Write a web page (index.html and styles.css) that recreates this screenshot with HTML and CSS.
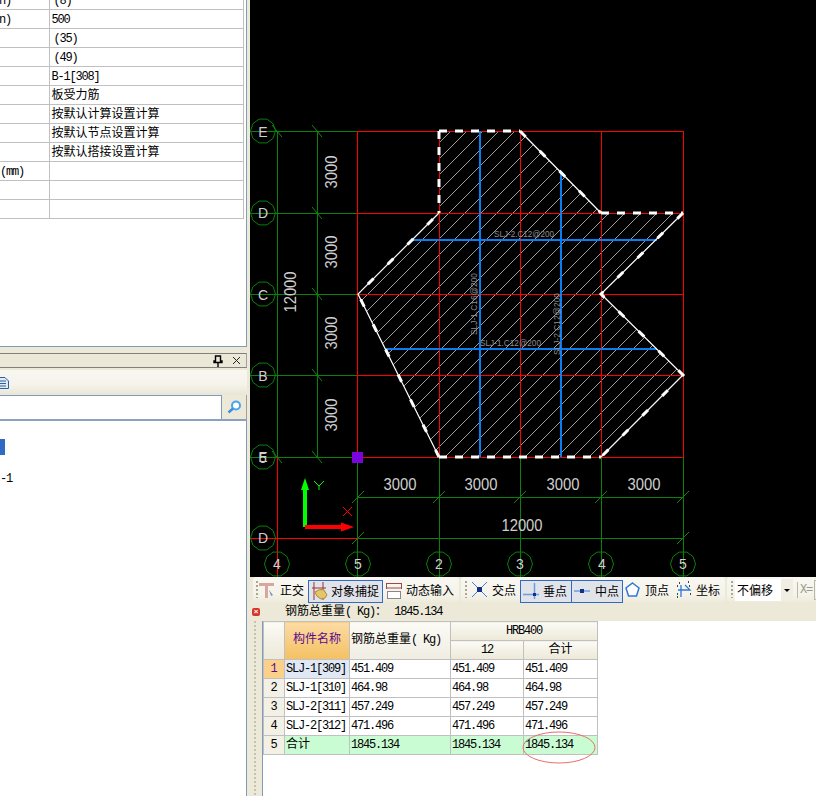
FILE: index.html
```html
<!DOCTYPE html>
<html lang="zh-CN">
<head>
<meta charset="utf-8">
<title>钢筋总重量</title>
<link rel="stylesheet" href="styles.css">
</head>
<body>
<div class="app">
  <aside class="side">
    <div class="props">
      <table class="prop-table">
        <colgroup><col class="pc1"><col class="pc2"></colgroup>
        <tr><td><span class="cut">h)</span></td><td class="in">(8)</td></tr>
        <tr><td><span class="cut">n)</span></td><td>500</td></tr>
        <tr><td></td><td class="in">(35)</td></tr>
        <tr><td></td><td class="in">(49)</td></tr>
        <tr><td></td><td>B-1[308]</td></tr>
        <tr><td></td><td class="cjk">板受力筋</td></tr>
        <tr><td></td><td class="cjk">按默认计算设置计算</td></tr>
        <tr><td></td><td class="cjk">按默认节点设置计算</td></tr>
        <tr><td></td><td class="cjk">按默认搭接设置计算</td></tr>
        <tr><td>(mm)</td><td></td></tr>
        <tr><td></td><td></td></tr>
        <tr><td></td><td></td></tr>
      </table>
    </div>
    <div class="pane-head">
      <svg class="pin" width="10" height="12" viewBox="0 0 10 12"><path d="M2.5 1h5v5h1.5v1.5h-8V6h1.5zM5 7.5V12" fill="none" stroke="#000" stroke-width="1.4"/></svg>
      <svg class="close" width="9" height="9" viewBox="0 0 9 9"><path d="M1 1l7 7M8 1L1 8" stroke="#222" fill="none"/></svg>
    </div>
    <div class="pane-tools">
      <svg width="9" height="12" viewBox="0 0 9 12"><path d="M-4 .5h9l3.5 3.5v7.5H-4z" fill="#dfe9f8" stroke="#2f5f9f"/><path d="M-3 4h9M-3 6.5h9M-3 9h9" stroke="#2f5f9f"/></svg>
    </div>
    <div class="pane-search">
      <div class="search-box"></div>
      <div class="search-btn">
        <svg width="15" height="14" viewBox="0 0 15 14"><circle cx="9" cy="5.5" r="4" fill="#fff" stroke="#4aa3ee" stroke-width="2"/><path d="M6 8.500L1.500 12.500" stroke="#3a8fe0" stroke-width="2.500"/></svg>
      </div>
    </div>
    <div class="pane-list">
      <div class="tree-mark"></div>
      <div class="tree-text">-1</div>
    </div>
  </aside>

  <main class="work">
    <svg class="canvas" width="566" height="577" viewBox="250 0 566 577">
      <defs>
        <pattern id="hatch" patternUnits="userSpaceOnUse" x="3" y="3" width="16" height="16">
          <path d="M-1 17L17 -1" stroke="#c4c4c4" stroke-width="0.8"/>
        </pattern>
        <polygon id="bub" points="12.500,0 10.100,7.300 3.900,11.900 -3.900,11.900 -10.100,7.300 -12.500,0 -10.100,-7.300 -3.900,-11.900 3.900,-11.900 10.100,-7.300" fill="none" stroke="#0a800a"/>
        <path id="tv" d="M-5 -6L5 6" stroke="#0c8a0c"/>
        <path id="th" d="M-6 6L6 -6" stroke="#0c8a0c"/>
      </defs>

      <polygon points="439,131 520,131 601,213 683,213 601,294 683,375 601,457 439,457 358,294 439,213" fill="url(#hatch)"/>

      <g stroke="#0c800c" fill="none">
        <path d="M251 131.500H358M251 213.500H358M251 294.500H358M251 375.500H358M251 457.500H358"/>
        <path d="M277.500 131V457M317.500 131V457"/>
        <path d="M358 497.500H683M358 538.500H683"/>
        <path d="M357.500 457V577M439.500 457V577M520.500 457V577M601.500 457V577M683.500 457V577"/>
      </g>
      <use href="#tv" x="277" y="131"/><use href="#tv" x="317" y="131"/><use href="#tv" x="317" y="213"/><use href="#tv" x="317" y="294"/><use href="#tv" x="317" y="375"/><use href="#tv" x="317" y="457"/><use href="#tv" x="277" y="457"/>
      <use href="#th" x="358" y="497"/><use href="#th" x="439" y="497"/><use href="#th" x="520" y="497"/><use href="#th" x="601" y="497"/><use href="#th" x="683" y="497"/><use href="#th" x="358" y="538"/><use href="#th" x="683" y="538"/>

      <g stroke="#f00" fill="none">
        <path d="M357.500 131V457M439.500 131V457M520.500 131V457M601.500 131V457M683.500 131V457"/>
        <path d="M358 131.500H683M358 213.500H683M358 294.500H683M358 375.500H683M358 457.500H683"/>
        <path d="M277.500 457V577M251 538.500H358"/>
      </g>

      <g stroke="#0a7df0" stroke-width="2" fill="none">
        <path d="M480 131V457M561 172V457M411 240H657M385 349H657"/>
      </g>

      <g stroke="#fff" fill="none">
        <path class="dash" d="M439 131H520M439 131V213M601 213H683M439 457H601"/>
        <path class="edge" d="M520 131L601 213M683 213L601 294L683 375L601 457M439 457L358 294L439 213"/>
        <path class="edge-thick" d="M520 131L601 213M683 213L601 294L683 375L601 457M439 457L358 294L439 213"/>
      </g>

      <g class="dim">
        <text x="331" y="172" text-anchor="middle" dominant-baseline="central" textLength="33" lengthAdjust="spacingAndGlyphs" transform="rotate(-90 331 172)">3000</text>
        <text x="331" y="252" text-anchor="middle" dominant-baseline="central" textLength="33" lengthAdjust="spacingAndGlyphs" transform="rotate(-90 331 252)">3000</text>
        <text x="331" y="333" text-anchor="middle" dominant-baseline="central" textLength="33" lengthAdjust="spacingAndGlyphs" transform="rotate(-90 331 333)">3000</text>
        <text x="331" y="415" text-anchor="middle" dominant-baseline="central" textLength="33" lengthAdjust="spacingAndGlyphs" transform="rotate(-90 331 415)">3000</text>
        <text x="290" y="292" text-anchor="middle" dominant-baseline="central" textLength="41" lengthAdjust="spacingAndGlyphs" transform="rotate(-90 290 292)">12000</text>
        <text x="400" y="484" text-anchor="middle" dominant-baseline="central" textLength="33" lengthAdjust="spacingAndGlyphs">3000</text>
        <text x="481" y="484" text-anchor="middle" dominant-baseline="central" textLength="33" lengthAdjust="spacingAndGlyphs">3000</text>
        <text x="563" y="484" text-anchor="middle" dominant-baseline="central" textLength="33" lengthAdjust="spacingAndGlyphs">3000</text>
        <text x="644" y="484" text-anchor="middle" dominant-baseline="central" textLength="33" lengthAdjust="spacingAndGlyphs">3000</text>
        <text x="522" y="525" text-anchor="middle" dominant-baseline="central" textLength="41" lengthAdjust="spacingAndGlyphs">12000</text>
      </g>

      <g class="bar-label">
        <text x="494" y="237" textLength="60" lengthAdjust="spacingAndGlyphs">SLJ-2.C12@200</text>
        <text x="480" y="346" textLength="61" lengthAdjust="spacingAndGlyphs">SLJ-1.C12@200</text>
        <text x="477" y="335" textLength="62" lengthAdjust="spacingAndGlyphs" transform="rotate(-90 477 335)">SLJ-1.C16@200</text>
        <text x="560" y="355" textLength="62" lengthAdjust="spacingAndGlyphs" transform="rotate(-90 560 355)">SLJ-2.C12@200</text>
      </g>

      <use href="#bub" x="263" y="131"/><use href="#bub" x="263" y="213"/><use href="#bub" x="263" y="294"/><use href="#bub" x="263" y="375"/><use href="#bub" x="263" y="457"/><use href="#bub" x="263" y="538"/>
      <use href="#bub" x="277" y="564"/><use href="#bub" x="358" y="564"/><use href="#bub" x="439" y="564"/><use href="#bub" x="520" y="564"/><use href="#bub" x="601" y="564"/><use href="#bub" x="683" y="564"/>

      <g class="axis" text-anchor="middle" dominant-baseline="central">
        <text x="263" y="132">E</text><text x="263" y="213">D</text><text x="263" y="295">C</text><text x="263" y="376">B</text><text x="263" y="457">E</text><text x="263" y="458">5</text><text x="263" y="538">D</text>
        <text x="277" y="564">4</text><text x="358" y="564">5</text><text x="439" y="564">2</text><text x="520" y="564">3</text><text x="602" y="564">4</text><text x="683" y="564">5</text>
      </g>

      <rect x="352" y="452" width="11" height="11" fill="#7a05dc"/>

      <path d="M305 527V488" stroke="#0f0" stroke-width="4"/>
      <path d="M305 478l-4 12h8z" fill="#0f0"/>
      <path d="M305 527H344" stroke="#f00" stroke-width="4"/>
      <path d="M354 527l-13 -4.500v9z" fill="#f00"/>
      <path d="M314 481l5 5 5 -5M319 486v4" stroke="#0f0" fill="none"/>
      <path d="M343 507l9 9M352 507l-9 9" stroke="#f00" fill="none"/>
    </svg>

    <div class="toolbar">
      <div class="group g1">
        <span class="grip"></span>
        <div class="tool t-a">
          <svg width="16" height="18" viewBox="0 0 16 18"><path d="M0 2h15v3H9v12H6V5H0z" fill="#d9a5a0"/><path d="M10 9l4 5-2 1z" fill="#7d94b5"/></svg>
          <span>正交</span>
        </div>
        <div class="tool on t-b">
          <svg width="16" height="18" viewBox="0 0 16 18"><path d="M2 0v18M11 0v18M0 6h14" stroke="#a03030" fill="none"/><path d="M3 10q5 -4 9 -2l3 5q-1 4 -6 4q-5 -2 -6 -7z" fill="#e5c56a" stroke="#a98d3a"/></svg>
          <span>对象捕捉</span>
        </div>
        <div class="tool t-c">
          <svg width="16" height="18" viewBox="0 0 16 18"><path d="M0 2.500h16M0 7h16M0.500 2v6M15.500 2v6" stroke="#a04848" fill="none"/><rect x="1.500" y="10.500" width="13" height="7" fill="#fff" stroke="#888"/></svg>
          <span>动态输入</span>
        </div>
      </div>
      <div class="group g2">
        <span class="grip"></span>
        <div class="tool t-d">
          <svg width="15" height="15" viewBox="0 0 15 15"><path d="M0 0L15 15M15 0L0 15" stroke="#3a7fd8"/><rect x="5" y="5" width="5" height="5" fill="#10308c"/></svg>
          <span>交点</span>
        </div>
        <div class="tool on t-e">
          <svg width="16" height="16" viewBox="0 0 16 16"><path d="M0 11.500H16M11.500 0V16" stroke="#6d9ce0" stroke-width="1.500"/><rect x="10" y="10" width="3" height="3" fill="#10308c"/></svg>
          <span>垂点</span>
        </div>
        <div class="tool on t-f">
          <svg width="16" height="8" viewBox="0 0 16 8"><path d="M0 4H16" stroke="#6d9ce0" stroke-width="1.500"/><rect x="6" y="2" width="4" height="4" fill="#10308c"/></svg>
          <span>中点</span>
        </div>
        <div class="tool t-g">
          <svg width="15" height="15" viewBox="0 0 15 15"><path d="M7.500 1L14 6L11.500 14H3.500L1 6z" fill="#fff" stroke="#2f78d8" stroke-width="1.500"/></svg>
          <span>顶点</span>
        </div>
        <div class="tool t-h">
          <svg width="16" height="17" viewBox="0 0 16 17"><path d="M5 4v12M2 9h12L9 4" stroke="#2f78d8" fill="none" stroke-width="1.300"/><path d="M1 5h1M3 2h1M12 1h1M13 5h1M1 13h1M1 16h1M14 13h1" stroke="#444" stroke-width="2"/></svg>
          <span>坐标</span>
        </div>
      </div>
      <div class="group g3">
        <span class="grip"></span>
        <div class="combo"><span class="combo-text">不偏移</span><span class="combo-btn"></span></div>
        <span class="sep"></span>
        <span class="xeq">X=</span>
        <span class="xbox"></span>
      </div>
    </div>

    <div class="summary">
      <span class="err">×</span>
      <span class="sum-text">钢筋总重量<span class="lat">( Kg)</span>： <span class="lat">1845.134</span></span>
    </div>

    <div class="lower">
      <div class="dock-grip"></div>
      <div class="sheet">
        <table class="grid">
          <colgroup><col class="c0"><col class="c1"><col class="c2"><col class="c3"><col class="c4"></colgroup>
          <tr class="h1"><th rowspan="2"></th><th rowspan="2" class="sel">构件名称</th><th rowspan="2" class="plain">钢筋总重量<span class="lat">( Kg)</span></th><th colspan="2" class="lat">HRB400</th></tr>
          <tr class="h2"><th class="lat">12</th><th>合计</th></tr>
          <tr><th class="rh act">1</th><td class="cur lat">SLJ-1[309]</td><td class="lat">451.409</td><td class="lat">451.409</td><td class="lat">451.409</td></tr>
          <tr><th class="rh">2</th><td class="lat">SLJ-1[310]</td><td class="lat">464.98</td><td class="lat">464.98</td><td class="lat">464.98</td></tr>
          <tr><th class="rh">3</th><td class="lat">SLJ-2[311]</td><td class="lat">457.249</td><td class="lat">457.249</td><td class="lat">457.249</td></tr>
          <tr><th class="rh">4</th><td class="lat">SLJ-2[312]</td><td class="lat">471.496</td><td class="lat">471.496</td><td class="lat">471.496</td></tr>
          <tr class="total"><th class="rh">5</th><td>合计</td><td class="lat">1845.134</td><td class="lat">1845.134</td><td class="lat">1845.134</td></tr>
        </table>
        <svg class="ring" width="74" height="33" viewBox="0 0 74 33"><ellipse cx="37" cy="16.500" rx="36" ry="15.500" fill="none" stroke="#e8706a"/></svg>
      </div>
    </div>
  </main>
</div>
</body>
</html>
```

FILE: styles.css
```css
* { box-sizing: border-box; }
html, body { margin: 0; padding: 0; }
body {
  width: 816px;
  height: 796px;
  overflow: hidden;
  background: #ece9d8;
  font-family: "Liberation Mono", "Noto Sans CJK SC", monospace;
  font-size: 12px;
  color: #000;
}
.app { display: flex; width: 816px; height: 796px; }

/* left side */
.side { width: 250px; flex: none; display: flex; flex-direction: column; background: #ece9d8; }
.props {
  height: 347px;
  width: 247px;
  background: #fff;
  border-right: 1px solid #7f9db9;
  border-bottom: 1px solid #7f9db9;
  overflow: hidden;
}
.prop-table {
  table-layout: fixed;
  border-collapse: collapse;
  width: 244px;
  margin-top: -10px;
  letter-spacing: -1.2px;
}
.pc1 { width: 49px; }
.prop-table td {
  height: 19px;
  padding: 1px 0 0 2px;
  border: 1px solid #c0c0c0;
  border-left: 0;
  white-space: nowrap;
  overflow: hidden;
  line-height: 16px;
}
.prop-table td:first-child { padding-left: 0; }
.prop-table .in { padding-left: 4px; }
.prop-table .cjk { letter-spacing: 0; }
.cut { display: block; margin-left: -1px; }

.pane-head {
  margin-top: 6px;
  height: 15px;
  width: 247px;
  background: #ebe8d8;
  border-top: 1px solid #808080;
  border-bottom: 1px solid #808080;
  border-right: 1px solid #a0a0a0;
  display: flex;
  align-items: center;
  justify-content: flex-end;
  gap: 9px;
  padding-right: 5px;
}
.pane-tools {
  margin-top: 2px;
  height: 25px;
  width: 247px;
  background: linear-gradient(#f8f7f1, #f5f3ea 60%, #e9e6d6);
  display: flex;
  align-items: center;
}
.pane-search {
  height: 26px;
  width: 247px;
  display: flex;
  border-right: 1px solid #a0a0a0;
  border-bottom: 2px solid #8ba2bd;
}
.search-box {
  width: 222px;
  background: #fff;
  border: 1px solid #7f9db9;
  border-left: 0;
  border-bottom: 0;
}
.search-btn { flex: 1; display: flex; align-items: center; justify-content: center; }
.pane-list {
  flex: 1;
  width: 247px;
  background: #fff;
  border-right: 1px solid #7f9db9;
  padding-top: 18px;
}
.tree-mark { width: 5px; height: 16px; background: #316ac5; }
.tree-text { margin-top: 17px; letter-spacing: -1.2px; line-height: 14px; }

/* right side */
.work { flex: 1; min-width: 0; display: flex; flex-direction: column; }
.canvas { display: block; flex: none; background: #000; }
.dash { stroke-width: 3; stroke-dasharray: 8 8; }
.edge { stroke-width: 1.2; }
.edge-thick { stroke-width: 3; stroke-dasharray: 8 20; }
.dim text {
  font-family: "Liberation Sans", sans-serif;
  font-size: 16px;
  fill: #cfcfcf;
}
.bar-label text {
  font-family: "Liberation Sans", sans-serif;
  font-size: 9px;
  fill: #8e8e8e;
}
.axis text {
  font-family: "Liberation Sans", sans-serif;
  font-size: 14px;
  fill: #d0d0d0;
}

.toolbar { height: 26px; flex: none; display: flex; align-items: flex-start; background: #ece9d8; }
.group {
  height: 25px;
  display: flex;
  align-items: center;
  background: linear-gradient(#f8f7f1, #f5f3ea 70%, #eeebdc);
  border-radius: 3px;
}
.g1 { width: 206px; margin-left: 3px; padding-left: 3px; }
.g2 { width: 264px; margin-left: 2px; padding-left: 4px; }
.g3 { flex: 1; margin-left: 2px; padding-left: 4px; overflow: hidden; }
.grip {
  width: 2px;
  height: 17px;
  flex: none;
  background: repeating-linear-gradient(#a9a694 0 2px, transparent 2px 4px);
}
.tool { display: flex; align-items: center; gap: 4px; height: 22px; flex: none; white-space: nowrap; }
.tool.on { background: #e0e3ea; border: 1px solid #316ac5; margin-top: 3px; height: 23px; }
.t-a { margin-left: 1px; gap: 5px; }
.t-b { margin-left: 4px; padding: 0 3px; width: 75px; gap: 3px; }
.t-c { margin-left: 3px; }
.t-d { margin-left: 5px; gap: 5px; }
.t-e { margin-left: 4px; width: 52px; padding-left: 2px; gap: 4px; }
.t-f { margin-left: -1px; width: 52px; padding-left: 2px; gap: 5px; }
.t-g { margin-left: 2px; gap: 5px; }
.t-h { margin-left: 7px; gap: 4px; }

.combo { margin-left: 2px; width: 58px; height: 22px; background: #fff; display: flex; align-items: center; flex: none; }
.combo-text { padding-left: 2px; flex: 1; }
.combo-btn { width: 12px; height: 22px; background: #f0eee2; position: relative; }
.combo-btn::after {
  content: "";
  position: absolute;
  left: 3px;
  top: 10px;
  border: 3px solid transparent;
  border-top: 3px solid #000;
  border-bottom: 0;
}
.sep { width: 1px; height: 16px; background: #b9b7a8; margin-left: 4px; flex: none; }
.xeq { color: #9a9a8e; letter-spacing: -1.2px; margin-left: 2px; flex: none; }
.xbox { width: 4px; height: 20px; border: 1px solid #b9b7a8; margin-left: 2px; flex: none; }

.summary { height: 18px; flex: none; display: flex; align-items: center; background: #ece9d8; padding-left: 2px; }
.err {
  width: 8px;
  height: 8px;
  flex: none;
  border-radius: 2px;
  background: #d8352a;
  color: #fff;
  font: bold 8px/8px "Liberation Sans", sans-serif;
  text-align: center;
}
.sum-text { margin-left: 25px; line-height: 16px; white-space: nowrap; }
.lat { letter-spacing: -1.2px; }

.lower { flex: 1; min-height: 0; display: flex; margin-left: -3px; }
.dock-grip {
  width: 15px;
  flex: none;
  background: repeating-linear-gradient(#c5c2b0 0 2px, transparent 2px 4px) 7px 0 / 2px 100% no-repeat;
}
.sheet {
  flex: 1;
  position: relative;
  background: #fff;
  border-left: 1px solid #7f9db9;
}
.grid { table-layout: fixed; border-collapse: collapse; width: 334px; }
.c0 { width: 21px; }
.c1 { width: 65px; }
.c2 { width: 101px; }
.c3 { width: 73px; }
.c4 { width: 74px; }
.grid th, .grid td {
  border: 1px solid #c0c0c0;
  padding: 0;
  font-weight: normal;
  overflow: hidden;
  white-space: nowrap;
  line-height: 17px;
}
.grid td { height: 19px; padding-left: 1px; }
.grid th { background: linear-gradient(#fbfaf5, #ece9d8); text-align: center; }
.h1 th, .h2 th { height: 19px; }
.grid .plain { text-align: left; padding-left: 1px; background: linear-gradient(#fbfaf5, #f0eee2); }
.grid .sel { background: linear-gradient(#fcdba4, #f4c061); color: #5a0a8c; }
.grid .rh { background: #f3f1e6; }
.grid .act { background: #fad08a; color: #5a0a8c; }
.grid .cur { background: #e0e8f5; }
.total td { background: #c9fcd3; }
.ring { position: absolute; left: 259px; top: 110px; }
```
